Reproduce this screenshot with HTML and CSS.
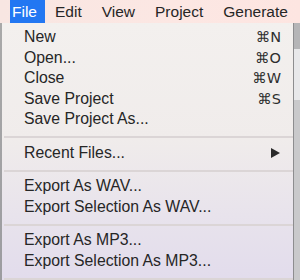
FILE: index.html
```html
<!DOCTYPE html>
<html>
<head>
<meta charset="utf-8">
<link rel="stylesheet" href="styles.css">
</head>
<body>
<div class="screen">
  <div class="menubar">
    <span class="top active">File</span>
    <span class="top">Edit</span>
    <span class="top">View</span>
    <span class="top">Project</span>
    <span class="top">Generate</span>
  </div>
  <div class="desk">
    <div class="menu">
      <div class="item"><span>New</span><span class="key">⌘N</span></div>
      <div class="item"><span>Open...</span><span class="key">⌘O</span></div>
      <div class="item"><span>Close</span><span class="key">⌘W</span></div>
      <div class="item"><span>Save Project</span><span class="key">⌘S</span></div>
      <div class="item"><span>Save Project As...</span></div>
      <div class="sep"></div>
      <div class="item"><span>Recent Files...</span><svg class="arrow" width="9" height="10" viewBox="0 0 9 10"><polygon points="0,0 9,5 0,10" fill="#2a2a2a"/></svg></div>
      <div class="sep"></div>
      <div class="item"><span>Export As WAV...</span></div>
      <div class="item"><span>Export Selection As WAV...</span></div>
      <div class="sep"></div>
      <div class="item"><span>Export As MP3...</span></div>
      <div class="item"><span>Export Selection As MP3...</span></div>
      <div class="sep"></div>
    </div>
    <div class="window"></div>
  </div>
</div>
</body>
</html>
```
FILE: styles.css
```css
html, body {
  margin: 0;
  padding: 0;
}
body {
  width: 300px;
  height: 280px;
  overflow: hidden;
  background: #b9b9bb;
  font-family: "Liberation Sans", Arial, sans-serif;
  color: #262626;
}
.screen {
  width: 300px;
  height: 280px;
  display: flex;
  flex-direction: column;
}
.menubar {
  height: 23px;
  flex: none;
  display: flex;
  align-items: stretch;
  padding-left: 10px;
  background: linear-gradient(90deg, #f8e6e2, #fce7e3 60%, #fde5e1);
  font-size: 15.5px;
}
.top {
  display: flex;
  align-items: center;
  padding: 0 10px;
  color: #262626;
}
.top.active {
  padding: 0 8px 0 2px;
  background: #2277f2;
  color: #ffffff;
}
.desk {
  flex: 1;
  display: flex;
  align-items: flex-start;
  padding-left: 2px;
  background: linear-gradient(180deg, #a9a9a9, #9c9ca0);
}
.menu {
  width: 291px;
  height: 257px;
  flex: none;
  box-sizing: border-box;
  padding: 4.4px 12px 0 22px;
  background: linear-gradient(180deg, #f3f0ee 0%, #f0eceb 45%, #e8e3ec 75%, #e2dcec 100%);
  font-size: 15.8px;
  overflow: hidden;
}
.item {
  height: 20.5px;
  line-height: 20.5px;
  display: flex;
  justify-content: space-between;
  align-items: center;
  white-space: nowrap;
}
.key {
  font-family: "DejaVu Sans", "Liberation Sans", sans-serif;
  font-size: 14.5px;
  color: #2e2e2e;
}
.arrow {
  margin-right: 1px;
}
.sep {
  height: 2px;
  margin: 6.5px 0 4.5px -20px;
  margin-right: -12px;
  background: #dbd5d6;
}
.window {
  flex: 1;
  height: 257px;
  background: linear-gradient(180deg, #b5b5b7 0%, #b5b5b7 10%, #e8e8ea 10%, #e8e8ea 30%, #c9c9cb 30%);
  border-left: 1px solid #8d8d8f;
}
```
